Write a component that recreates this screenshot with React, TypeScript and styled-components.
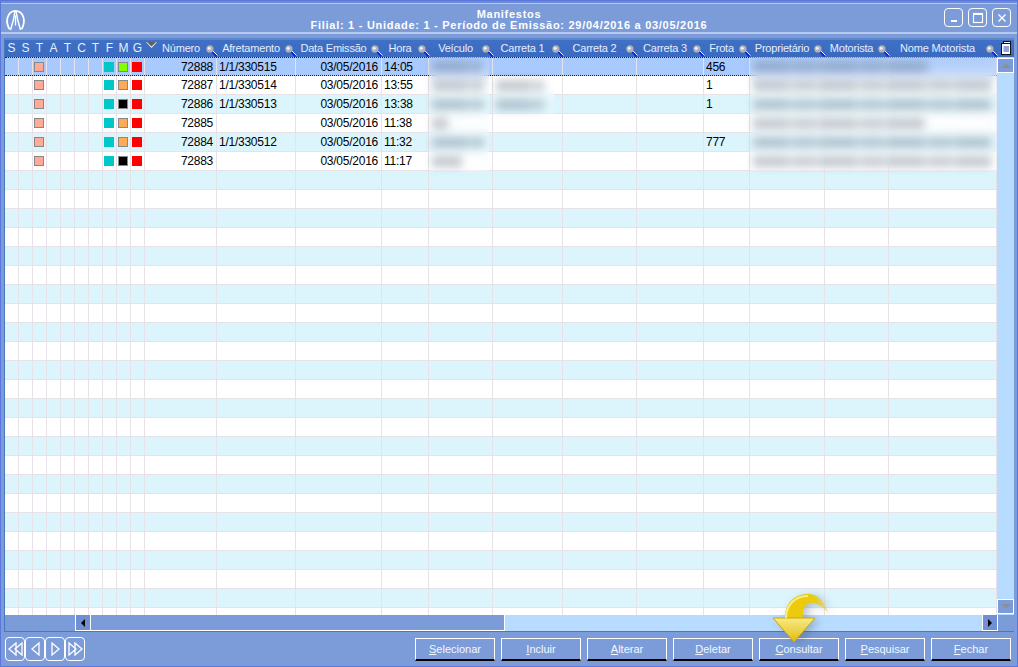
import styled, { createGlobalStyle } from "styled-components";
import type { ReactNode } from "react";

const COLUMNS =
  "repeat(10, 14px) 72px 79px 86px 47px 64px 70px 74px 67px 46px 75px 64px 108px";

type Manifest = {
  numero: string;
  afretamento: string;
  hora: string;
  frota: string;
  status: string;
};

const manifests: Manifest[] = [
  { numero: "72888", afretamento: "1/1/330515", hora: "14:05", frota: "456", status: "#80ff00" },
  { numero: "72887", afretamento: "1/1/330514", hora: "13:55", frota: "1", status: "#ffaa55" },
  { numero: "72886", afretamento: "1/1/330513", hora: "13:38", frota: "1", status: "#000000" },
  { numero: "72885", afretamento: "", hora: "11:38", frota: "", status: "#ffaa55" },
  { numero: "72884", afretamento: "1/1/330512", hora: "11:32", frota: "777", status: "#ffaa55" },
  { numero: "72883", afretamento: "", hora: "11:17", frota: "", status: "#000000" },
];

const flagHeaders = ["S", "S", "T", "A", "T", "C", "T", "F", "M", "G"];
const searchHeaders = [
  "Número",
  "Afretamento",
  "Data Emissão",
  "Hora",
  "Veículo",
  "Carreta 1",
  "Carreta 2",
  "Carreta 3",
  "Frota",
  "Proprietário",
  "Motorista",
  "Nome Motorista",
];

const ROW_COUNT = 30;

const veiculoSmears = [50, 52, 52, 16, 52, 30];
const carretaSmears = [48, 48];
const donoSmears = [176, 238, 238, 172, 238, 238];

export default function App() {
  return (
    <Window>
      <GlobalStyle />
      <TopEdge />
      <TitleBar>
        <Logo />
        <TitleText>
          <span>Manifestos</span>
          <span>Filial: 1 - Unidade: 1 - Período de Emissão: 29/04/2016 a 03/05/2016</span>
        </TitleText>
        <WindowControls>
          <WindowButton>
            <svg width="10" height="10" viewBox="0 0 10 10">
              <rect x="2" y="7" width="6" height="2" fill="#fff" />
            </svg>
          </WindowButton>
          <WindowButton>
            <svg width="12" height="12" viewBox="0 0 12 12">
              <rect x="1.5" y="1.5" width="9" height="9" fill="none" stroke="#fff" strokeWidth="1.2" />
              <rect x="1" y="1" width="10" height="2" fill="#fff" />
            </svg>
          </WindowButton>
          <WindowButton>
            <svg width="10" height="10" viewBox="0 0 10 10">
              <path d="M1.5 1.5 L8.5 8.5 M8.5 1.5 L1.5 8.5" stroke="#fff" strokeWidth="1.4" />
            </svg>
          </WindowButton>
        </WindowControls>
      </TitleBar>
      <Divider />

      <GridFrame>
        <HeaderRow>
          <HeaderColumns>
            {flagHeaders.map((label, i) => (
              <FlagHeader key={i}>{label}</FlagHeader>
            ))}
            {searchHeaders.map((label, i) => (
              <SearchHeader key={label} $sorted={i === 0}>
                {i === 0 && <SortMark />}
                {label}
                <MagnifierSpot>
                  <Magnifier />
                </MagnifierSpot>
              </SearchHeader>
            ))}
          </HeaderColumns>
          <ColumnsIcon>
            <svg width="12" height="14" viewBox="0 0 12 14">
              <rect x="3.5" y="0.5" width="7" height="2" fill="#fff" stroke="#111" />
              <rect x="1.5" y="2.5" width="9" height="11" fill="#fff" stroke="#111" />
              <path d="M3.5 6 H9 M3.5 8 H9 M3.5 10 H9" stroke="#2848b0" />
            </svg>
          </ColumnsIcon>
        </HeaderRow>

        <BodyArea>
          <Rows>
            {Array.from({ length: ROW_COUNT }).map((_, i) => {
              const m = manifests[i];
              return (
                <Row key={i} $selected={i === 0} $striped={i % 2 === 0}>
                  {flagHeaders.map((_, c) => (
                    <FlagCell key={c}>
                      {m && c === 2 && <Square $fill="#ffaa99" $outlined />}
                      {m && c === 7 && <Square $fill="#00c8c8" />}
                      {m && c === 8 && <Square $fill={m.status} $outlined />}
                      {m && c === 9 && <Square $fill="#ff0000" />}
                    </FlagCell>
                  ))}
                  <Cell $right>{m?.numero}</Cell>
                  <Cell>{m?.afretamento}</Cell>
                  <Cell $right>{m && "03/05/2016"}</Cell>
                  <Cell>{m?.hora}</Cell>
                  <Cell />
                  <Cell />
                  <Cell />
                  <Cell />
                  <Cell>{m?.frota}</Cell>
                  <Cell />
                  <Cell />
                  <Cell />
                </Row>
              );
            })}
          </Rows>

          <BlurPatch $left={424} $top={0} $width={60} $rows={6}>
            {veiculoSmears.map((w, i) => (
              <SmearRow key={i}>
                <Smear $width={w} />
              </SmearRow>
            ))}
          </BlurPatch>
          <BlurPatch $left={488} $top={19} $width={62} $rows={2}>
            {carretaSmears.map((w, i) => (
              <SmearRow key={i}>
                <Smear $width={w} />
              </SmearRow>
            ))}
          </BlurPatch>
          <BlurPatch $left={745} $top={0} $width={247} $rows={6}>
            {donoSmears.map((w, i) => (
              <SmearRow key={i}>
                <Smear $width={w} />
              </SmearRow>
            ))}
          </BlurPatch>

          <VerticalBar>
            <ScrollButton>
              <Triangle $dir="up" />
            </ScrollButton>
            <ScrollButton>
              <Triangle $dir="down" />
            </ScrollButton>
          </VerticalBar>
        </BodyArea>

        <HorizontalBar>
          <BarSpacer />
          <HorizontalButton>
            <Triangle $dir="left" />
          </HorizontalButton>
          <Track>
            <Thumb />
          </Track>
          <HorizontalButton>
            <Triangle $dir="right" />
          </HorizontalButton>
          <BarCorner />
        </HorizontalBar>
      </GridFrame>

      <Footer>
        <NavGroup>
          <NavButton>
            <NavArrow d="M8 1 L1 7 L8 13 Z M14 1 L7 7 L14 13 Z" />
          </NavButton>
          <NavButton>
            <NavArrow d="M11 1 L4 7 L11 13 Z" />
          </NavButton>
          <NavButton>
            <NavArrow d="M4 1 L11 7 L4 13 Z" />
          </NavButton>
          <NavButton>
            <NavArrow d="M1 1 L8 7 L1 13 Z M7 1 L14 7 L7 13 Z" />
          </NavButton>
        </NavGroup>
        <Actions>
          <ActionButton letter="S" rest="elecionar" />
          <ActionButton letter="I" rest="ncluir" />
          <ActionButton letter="A" rest="lterar" />
          <ActionButton letter="D" rest="eletar" />
          <ActionButton letter="C" rest="onsultar" />
          <ActionButton letter="P" rest="esquisar" />
          <ActionButton letter="F" rest="echar" />
        </Actions>
      </Footer>

      <PointerArrow />
    </Window>
  );
}

function ActionButton({ letter, rest }: { letter: ReactNode; rest: string }) {
  return (
    <Action>
      <u>{letter}</u>
      {rest}
    </Action>
  );
}

function Logo() {
  return (
    <LogoWrap>
      <svg width="22" height="24" viewBox="0 0 24 26" fill="none" stroke="#fff">
        <path d="M5 23 C0 15 2 4 11 3 C21 3 23 15 18 23" strokeWidth="1.9" />
        <path d="M11 3 C10 11 8 18 6 24" strokeWidth="1.6" />
        <path d="M12 3 C13 11 15 18 17 24" strokeWidth="1.6" />
        <path d="M11.5 8 V19" strokeWidth="1.4" />
      </svg>
    </LogoWrap>
  );
}

function Magnifier() {
  return (
    <svg width="12" height="12" viewBox="0 0 12 12">
      <path d="M5.5 6 L10.5 11.5" stroke="#0a20e0" strokeWidth="1.8" />
      <path d="M6.5 5.5 L11.5 10.5" stroke="#ffffff" strokeWidth="0.9" />
      <circle cx="3.9" cy="3.9" r="3.6" fill="#aeb2b8" />
      <circle cx="3.2" cy="3.2" r="1.5" fill="#eef0f4" />
    </svg>
  );
}

function SortMark() {
  return (
    <SortSpot>
      <svg width="11" height="6" viewBox="0 0 11 6">
        <path d="M0 0 H11 L5.5 6 Z" fill="#e8ecf4" />
        <path d="M1 0 H10 L5.5 4.6 Z" fill="#5e5e66" />
      </svg>
    </SortSpot>
  );
}

function NavArrow({ d }: { d: string }) {
  return (
    <svg width="15" height="14" viewBox="0 0 15 14">
      <path d={d} fill="none" stroke="#fff" strokeWidth="1.3" />
    </svg>
  );
}

function PointerArrow() {
  return (
    <ArrowSpot>
      <svg width="60" height="54" viewBox="0 0 60 54">
        <defs>
          <linearGradient id="tailFade" x1="0" y1="0" x2="1" y2="0">
            <stop offset="0" stopColor="#eccb0c" />
            <stop offset="0.65" stopColor="#eccb0c" />
            <stop offset="1" stopColor="#eccb0c" stopOpacity="0.25" />
          </linearGradient>
          <linearGradient id="headFill" x1="0" y1="0" x2="0" y2="1">
            <stop offset="0" stopColor="#f8eb85" />
            <stop offset="1" stopColor="#e0bb10" />
          </linearGradient>
        </defs>
        <path
          d="M13 29 C12 11 25 3 38 4 C47 5 53 13 57 24 C50 16 44 12 38 13 C32 14 30 21 31 29 Z"
          fill="url(#tailFade)"
        />
        <path d="M1 28 H43 L22 52 Z" fill="url(#headFill)" stroke="#c8a800" strokeWidth="1" />
        <path d="M14 28 C14 14 24 6 36 6" fill="none" stroke="#f9ec90" strokeWidth="2" />
      </svg>
    </ArrowSpot>
  );
}

const GlobalStyle = createGlobalStyle`
  html, body {
    margin: 0;
    padding: 0;
    background: #7b9cd8;
  }
  body {
    font-family: "Liberation Sans", Arial, sans-serif;
    font-size: 12px;
  }
`;

const Window = styled.div`
  position: relative;
  box-sizing: border-box;
  width: 1018px;
  height: 667px;
  overflow: hidden;
  display: flex;
  flex-direction: column;
  background: #7b9cd8;
  border: 1px solid #5a78dc;
`;

const TopEdge = styled.div`
  height: 2px;
  flex: none;
  background: #6c8ad6;
  border-bottom: 1px solid #b4c8f0;
`;

const TitleBar = styled.div`
  flex: none;
  height: 28px;
  display: flex;
  align-items: center;
  justify-content: space-between;
  padding: 0 6px 0 4px;
`;

const LogoWrap = styled.div`
  width: 22px;
  height: 24px;
  margin-top: 3px;
`;

const TitleText = styled.div`
  flex: 1;
  display: flex;
  flex-direction: column;
  align-items: center;
  margin-left: 47px;
  padding-top: 3px;
  color: #fff;
  font-weight: 700;
  font-size: 11px;
  line-height: 11px;
  letter-spacing: 0.72px;
`;

const WindowControls = styled.div`
  display: flex;
  gap: 5px;
  margin-bottom: 1px;
`;

const WindowButton = styled.div`
  box-sizing: border-box;
  width: 19px;
  height: 19px;
  display: flex;
  align-items: center;
  justify-content: center;
  border: 1px solid #fff;
  border-radius: 4px;
`;

const Divider = styled.div`
  flex: none;
  height: 2px;
  background: #b4c8f0;
  margin-bottom: 4px;
`;

const GridFrame = styled.div`
  flex: none;
  width: 1009px;
  margin-left: 3px;
  border-left: 1px solid #4a78c0;
  border-top: 2px solid #5d86c8;
  border-bottom: 1px solid #4a78b8;
`;

const HeaderRow = styled.div`
  height: 17px;
  display: flex;
  background: linear-gradient(#3f70c6, #3a6bc0);
`;

const HeaderColumns = styled.div`
  display: grid;
  grid-template-columns: ${COLUMNS};
  width: 992px;
`;

const FlagHeader = styled.div`
  color: #e8eefb;
  text-align: center;
  line-height: 17px;
  font-size: 12px;
  padding-right: 1px;
`;

const SearchHeader = styled.div<{ $sorted?: boolean }>`
  position: relative;
  box-sizing: border-box;
  color: #e8eefb;
  text-align: center;
  line-height: 17px;
  font-size: 11px;
  letter-spacing: -0.2px;
  white-space: nowrap;
  padding-right: 11px;
  padding-left: ${(p) => (p.$sorted ? "11px" : "0")};
`;

const MagnifierSpot = styled.span`
  position: absolute;
  right: -1px;
  bottom: 0;
  width: 12px;
  height: 12px;
  line-height: 0;
`;

const SortSpot = styled.span`
  position: absolute;
  left: 1px;
  top: 2px;
  line-height: 0;
`;

const ColumnsIcon = styled.div`
  flex: 1;
  display: flex;
  justify-content: center;
  padding-top: 1px;
`;

const BodyArea = styled.div`
  position: relative;
  display: flex;
  height: 558px;
`;

const Rows = styled.div`
  width: 992px;
  height: 558px;
  overflow: hidden;
`;

const Row = styled.div<{ $selected?: boolean; $striped?: boolean }>`
  box-sizing: border-box;
  display: grid;
  grid-template-columns: ${COLUMNS};
  height: 19px;
  color: #000;
  background: ${(p) => (p.$selected ? "#a8caff" : p.$striped ? "#dcf5fd" : "#ffffff")};
  border-bottom: ${(p) => (p.$selected ? "1px dotted #222" : "1px solid #e6e2e8")};
  border-top: ${(p) => (p.$selected ? "1px dotted #222" : "none")};
`;

const FlagCell = styled.div`
  display: flex;
  align-items: center;
  justify-content: center;
  border-right: 1px solid #e6e2e8;
`;

const Cell = styled.div<{ $right?: boolean }>`
  box-sizing: border-box;
  padding: ${(p) => (p.$right ? "0 3px" : "0 2px")};
  line-height: 18px;
  font-size: 12px;
  letter-spacing: -0.25px;
  text-align: ${(p) => (p.$right ? "right" : "left")};
  border-right: 1px solid #e6e2e8;
  white-space: nowrap;
  overflow: hidden;
`;

const Square = styled.span<{ $fill: string; $outlined?: boolean }>`
  box-sizing: border-box;
  display: block;
  width: 10px;
  height: 10px;
  margin-right: 1px;
  background: ${(p) => p.$fill};
  border: ${(p) => (p.$outlined ? "1px solid #888" : "none")};
`;

const BlurPatch = styled.div<{ $left: number; $top: number; $width: number; $rows: number }>`
  position: absolute;
  left: ${(p) => p.$left}px;
  top: ${(p) => p.$top}px;
  width: ${(p) => p.$width}px;
  height: ${(p) => p.$rows * 19}px;
  backdrop-filter: blur(6px);
  background: rgba(255, 255, 255, 0.16);
  display: flex;
  flex-direction: column;
`;

const SmearRow = styled.div`
  height: 19px;
  display: flex;
  align-items: center;
  padding-left: 3px;
`;

const Smear = styled.div<{ $width: number }>`
  width: ${(p) => p.$width}px;
  height: 11px;
  background: repeating-linear-gradient(
    90deg,
    rgba(60, 80, 100, 0.3) 0 34px,
    rgba(60, 80, 100, 0.22) 34px 42px,
    rgba(60, 80, 100, 0.28) 42px 61px,
    rgba(60, 80, 100, 0.22) 61px 68px
  );
  filter: blur(4px);
`;

const VerticalBar = styled.div`
  flex: 1;
  display: flex;
  flex-direction: column;
  justify-content: space-between;
  background: #b8dcff;
  padding: 1px 0;
`;

const ScrollButton = styled.div`
  box-sizing: border-box;
  height: 15px;
  display: flex;
  align-items: center;
  justify-content: center;
  background: #7b9cd8;
  border: 1px solid #fff;
`;

const Triangle = styled.span<{ $dir: "up" | "down" | "left" | "right" }>`
  display: block;
  width: 0;
  height: 0;
  ${(p) =>
    p.$dir === "up"
      ? "border-left: 5px solid transparent; border-right: 5px solid transparent; border-bottom: 5px solid #8a8f9c;"
      : p.$dir === "down"
        ? "border-left: 5px solid transparent; border-right: 5px solid transparent; border-top: 5px solid #8a8f9c;"
        : p.$dir === "left"
          ? "border-top: 4px solid transparent; border-bottom: 4px solid transparent; border-right: 4px solid #000;"
          : "border-top: 4px solid transparent; border-bottom: 4px solid transparent; border-left: 4px solid #000;"}
`;

const HorizontalBar = styled.div`
  height: 16px;
  display: flex;
`;

const BarSpacer = styled.div`
  width: 70px;
  border-bottom: 1px solid #7b9cd8;
`;

const HorizontalButton = styled.div`
  box-sizing: border-box;
  width: 16px;
  display: flex;
  align-items: center;
  justify-content: center;
  background: #6f90d4;
  border-left: 1px solid #fff;
  border-right: 1px solid #fff;
  border-bottom: 1px solid #fff;
`;

const Track = styled.div`
  flex: 1;
  background: #b8dcff;
`;

const Thumb = styled.div`
  box-sizing: border-box;
  width: 414px;
  height: 16px;
  background: #7b9cd8;
  border-right: 1px solid #fff;
  border-bottom: 1px solid #fff;
`;

const BarCorner = styled.div`
  width: 16px;
`;

const Footer = styled.div`
  flex: 1;
  display: flex;
  align-items: flex-start;
  justify-content: space-between;
  padding: 5px 6px 0 4px;
`;

const NavGroup = styled.div`
  display: flex;
`;

const NavButton = styled.div`
  box-sizing: border-box;
  width: 20px;
  height: 24px;
  display: flex;
  align-items: center;
  justify-content: center;
  border: 1px solid #fff;
  border-radius: 4px;
`;

const Actions = styled.div`
  display: flex;
  gap: 6px;
  padding-top: 1px;
`;

const Action = styled.div`
  box-sizing: border-box;
  width: 80px;
  height: 23px;
  display: flex;
  align-items: center;
  justify-content: center;
  color: #f4f7ff;
  font-size: 11px;
  border: 1px solid #fff;
  border-bottom: 2px solid #000;
`;

const ArrowSpot = styled.div`
  position: absolute;
  left: 771px;
  top: 589px;
  width: 60px;
  height: 54px;
  filter: drop-shadow(4px 2px 4px rgba(70, 80, 110, 0.35));
`;
